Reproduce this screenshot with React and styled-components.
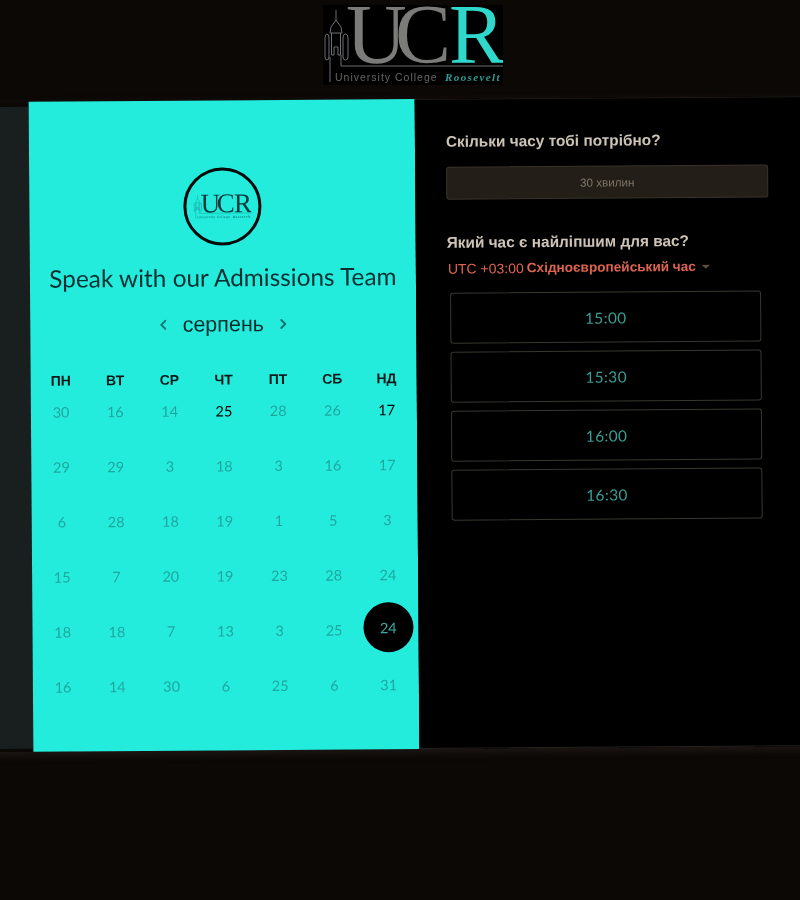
import React from "react";
import styled, { createGlobalStyle } from "styled-components";
import { ChevronLeft, ChevronRight } from "lucide-react";

const Global = createGlobalStyle`
  html, body { margin: 0; padding: 0; background: #0c0806; overflow: hidden; }
  body { width: 800px; height: 900px; font-family: "Liberation Sans", Arial, sans-serif; }
`;

const Page = styled.div`
  width: 800px;
  height: 900px;
  overflow: hidden;
  background: #0c0806;
  filter: blur(0.35px);
`;

const Header = styled.header`
  height: 99px;
  padding: 5px 0 0 26px;
  box-sizing: border-box;
  display: flex;
  justify-content: center;
`;

const Band = styled.main`
  width: 880px;
  height: 650px;
  margin-left: -30px;
  display: flex;
  transform: rotate(-0.42deg);
  transform-origin: 445px 325px;
  box-shadow: 0 3px 10px rgba(80, 70, 65, 0.3);
`;

const Gutter = styled.div`
  width: 61px;
  margin: 5px 0 3px;
  background: #191e1e;
`;

const CalendarPanel = styled.section`
  width: 386px;
  box-sizing: border-box;
  background: #24ecdd;
  display: flex;
  flex-direction: column;
  align-items: center;
  padding-top: 67px;
`;

const Avatar = styled.div`
  width: 78px;
  height: 78px;
  box-sizing: border-box;
  border: 3px solid #050a0a;
  border-radius: 50%;
  display: flex;
  align-items: center;
  justify-content: center;
`;

const Title = styled.h1`
  margin: 16px 0 0;
  font: 400 24.4px/32px Lato, sans-serif;
  color: #0b2f32;
  white-space: nowrap;
`;

const MonthRow = styled.div`
  margin-top: 16px;
  display: flex;
  align-items: center;
  justify-content: center;
  gap: 11px;
  height: 30px;
  color: #0d2a2b;
  font-size: 21.5px;
`;

const Chevron = styled.span`
  display: flex;
  color: #137872;
`;

const Grid = styled.div`
  margin-top: 34px;
  width: 380px;
  display: grid;
  grid-template-columns: repeat(7, 1fr);
`;

const DayHead = styled.div`
  height: 12px;
  display: flex;
  align-items: center;
  justify-content: center;
  font-size: 14px;
  font-weight: 700;
  color: #0a1a1a;
`;

const Cell = styled.div`
  height: 55px;
  display: flex;
  align-items: flex-start;
  justify-content: center;
`;

const Day = styled.span`
  width: 50px;
  height: 50px;
  margin-top: ${(p) => (p.$selected ? "-2px" : "0")};
  border-radius: 50%;
  display: flex;
  align-items: center;
  justify-content: center;
  font: 400 14.5px Lato, sans-serif;
  background: ${(p) => (p.$selected ? "#000" : "transparent")};
  color: ${(p) => (p.$selected ? "#3fa9a2" : p.$active ? "#000" : "#1fa79e")};
`;

const TimePanel = styled.section`
  flex: 1;
  box-sizing: border-box;
  background: #000;
  padding: 33px 32px 0 31px;
  box-shadow: inset 0 1px 0 #1c1a17, inset 0 -1px 0 #24211c;
`;

const Question = styled.h2`
  margin: 0;
  font-size: 15.4px;
  line-height: 20px;
  font-weight: 700;
  color: #cdc3b6;
`;

const Duration = styled.div`
  margin-top: 15px;
  width: 322px;
  height: 33px;
  box-sizing: border-box;
  background: #231e18;
  border: 1px solid #38332a;
  border-radius: 3px;
  display: flex;
  align-items: center;
  justify-content: center;
  font-size: 11.7px;
  color: #7d7467;
`;

const SecondQuestion = styled(Question)`
  margin-top: 33px;
`;

const Zone = styled.div`
  margin: 6px 0 0 1px;
  display: flex;
  align-items: center;
  font-size: 14px;
  line-height: 20px;
  color: #dc6450;
`;

const ZoneName = styled.strong`
  margin-left: 3px;
  font-size: 13.6px;
`;

const Caret = styled.span`
  margin-left: 6px;
  width: 0;
  height: 0;
  border-left: 4px solid transparent;
  border-right: 4px solid transparent;
  border-top: 4px solid #5c5048;
`;

const Slots = styled.div`
  margin: 14px 0 0 3px;
  width: 311px;
  display: flex;
  flex-direction: column;
  gap: 8px;
`;

const Slot = styled.button`
  height: 51px;
  box-sizing: border-box;
  background: #000;
  border: 1px solid #38372f;
  border-radius: 3px;
  font: 400 15.4px Lato, sans-serif;
  letter-spacing: 0.4px;
  color: #3b9e94;
`;

function Logo({ width, height, main, accent, script, sub, mark, background }) {
  return (
    <svg width={width} height={height} viewBox="0 0 180 80" style={{ background }}>
      <path
        d="M13 5V15M13 15L8 22L7 28M13 15L18 22L19 28M7 28H19M8.5 28V50H11V42H15V50H17.500V28M7 77V52M2 52V33Q2 29 4 29Q6 29 6 33V52Q6 55 4 55Q2 55 2 52M20 52V33Q20 29 22.500 29Q25 29 25 33V52Q25 55 22.500 55Q20 55 20 52M18 50V61H180"
        fill="none"
        stroke={mark}
        strokeWidth="1"
      />
      <text fontFamily="'Liberation Serif', serif" fontSize="84" fill={main}>
        <tspan x="23" y="58">U</tspan>
        <tspan x="72" y="58">C</tspan>
      </text>
      <text x="126" y="58" fontFamily="'Liberation Serif', serif" fontSize="84" fill={accent}>R</text>
      <text x="12" y="76" fontFamily="'Liberation Sans', sans-serif" fontSize="10.5" letterSpacing="1" fill={sub}>University College</text>
      <text x="122" y="76" fontFamily="'Liberation Serif', serif" fontStyle="italic" fontWeight="700" fontSize="11" letterSpacing="1.4" fill={script}>Roosevelt</text>
    </svg>
  );
}

const heads = ["ПН", "ВТ", "СР", "ЧТ", "ПТ", "СБ", "НД"];
const days = [
  30, 16, 14, 25, 28, 26, 17,
  29, 29, 3, 18, 3, 16, 17,
  6, 28, 18, 19, 1, 5, 3,
  15, 7, 20, 19, 23, 28, 24,
  18, 18, 7, 13, 3, 25, 24,
  16, 14, 30, 6, 25, 6, 31,
];
const times = ["15:00", "15:30", "16:00", "16:30"];

export default function App() {
  return (
    <Page>
      <Global />
      <Header>
        <Logo width={180} height={80} main="#7b7b79" accent="#2fd8cb" script="#2a9f96" sub="#666664" mark="#6f6f72" background="#000" />
      </Header>
      <Band>
        <Gutter />
        <CalendarPanel>
          <Avatar>
            <Logo width={58} height={26} main="#08393c" accent="#08393c" script="#117a76" sub="#117a76" mark="#137b77" background="transparent" />
          </Avatar>
          <Title>Speak with our Admissions Team</Title>
          <MonthRow>
            <Chevron><ChevronLeft size={16} strokeWidth={3} /></Chevron>
            <span>серпень</span>
            <Chevron><ChevronRight size={16} strokeWidth={3} /></Chevron>
          </MonthRow>
          <Grid>
            {heads.map((h) => <DayHead key={h}>{h}</DayHead>)}
            {days.map((d, i) => (
              <Cell key={i}>
                <Day $active={i === 3 || i === 6} $selected={i === 34}>{d}</Day>
              </Cell>
            ))}
          </Grid>
        </CalendarPanel>
        <TimePanel>
          <Question>Скільки часу тобі потрібно?</Question>
          <Duration>30 хвилин</Duration>
          <SecondQuestion>Який час є найліпшим для вас?</SecondQuestion>
          <Zone>
            UTC +03:00<ZoneName>Східноєвропейський час</ZoneName><Caret />
          </Zone>
          <Slots>
            {times.map((t) => <Slot key={t}>{t}</Slot>)}
          </Slots>
        </TimePanel>
      </Band>
    </Page>
  );
}
